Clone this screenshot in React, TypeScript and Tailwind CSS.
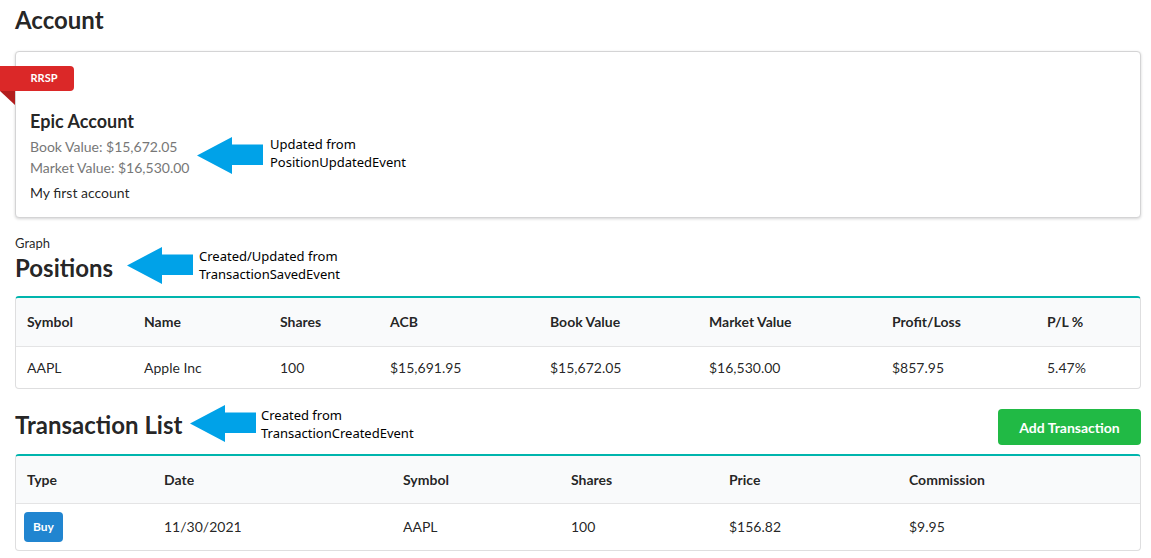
import React from "react";

const Arrow = ({ className }: { className: string }) => (
  <svg className={className} width="66" height="37" viewBox="0 0 66 37">
    <polygon points="0,18.5 35,0 35,7.5 66,7.5 66,28 35,28 35,37" fill="#00a2e8" />
  </svg>
);

const Note = ({ className, lines }: { className: string; lines: string[] }) => (
  <div className={"absolute text-[13px] leading-[18px] text-black font-['Noto_Sans',sans-serif] " + className}>
    {lines.map((l) => (
      <div key={l}>{l}</div>
    ))}
  </div>
);

const posCols = [117, 136, 110, 160, 159, 183, 155, 105];
const posHead = ["Symbol", "Name", "Shares", "ACB", "Book Value", "Market Value", "Profit/Loss", "P/L %"];
const posRow = ["AAPL", "Apple Inc", "100", "$15,691.95", "$15,672.05", "$16,530.00", "$857.95", "5.47%"];

const txCols = [137, 239, 168, 158, 180, 243];
const txHead = ["Type", "Date", "Symbol", "Shares", "Price", "Commission"];
const txRow = ["", "11/30/2021", "AAPL", "100", "$156.82", "$9.95"];

export default function App() {
  return (
    <div className="relative w-[1151px] h-[558px] overflow-hidden bg-white font-['Lato',sans-serif] text-[14px] text-[rgba(0,0,0,0.87)]">
      <div className="pl-[15px] pr-[10px] pt-[4px]">
        <h2 className="text-[24px] leading-[31px] font-bold text-[rgba(0,0,0,0.87)]">Account</h2>

        <div className="mt-[16px] rounded-[4px] border border-[#d4d4d5] bg-white shadow-[0_1px_3px_0_#d4d4d5] px-[14px] pt-[14px] pb-[14px]">
          <div className="relative ml-[-30px] inline-flex h-[25px] w-[74px] items-center justify-center rounded-r-[4px] bg-[#db2828] pl-[14px] text-[11px] font-bold text-white">
            RRSP
            <div className="absolute left-0 top-[25px] h-0 w-0 border-t-[14px] border-l-[15px] border-t-[#b21e1e] border-l-transparent" />
          </div>
          <div className="mt-[19px] text-[18px] leading-[23px] font-bold">Epic Account</div>
          <div className="mt-[3px] leading-[21px] text-[#777777]">Book Value: $15,672.05</div>
          <div className="leading-[21px] text-[#777777]">Market Value: $16,530.00</div>
          <div className="mt-[4px] leading-[21px]">My first account</div>
        </div>

        <div className="mt-[16px] text-[13px] leading-[18px]">Graph</div>
        <h2 className="text-[24px] leading-[31px] font-bold">Positions</h2>

        <div className="mt-[13px] overflow-hidden rounded-[4px] border border-[#dededf] border-t-2 border-t-[#00b5ad]">
          <table className="w-full table-fixed border-collapse">
            <colgroup>
              {posCols.map((w, i) => (
                <col key={i} style={{ width: w }} />
              ))}
            </colgroup>
            <thead>
              <tr className="h-[48px] bg-[#f9fafb] border-b border-[#e4e4e5]">
                {posHead.map((h) => (
                  <th key={h} className="px-[11px] text-left font-bold">{h}</th>
                ))}
              </tr>
            </thead>
            <tbody>
              <tr className="h-[42px]">
                {posRow.map((c, i) => (
                  <td key={i} className="px-[11px]">{c}</td>
                ))}
              </tr>
            </tbody>
          </table>
        </div>

        <div className="mt-[20px] flex items-start justify-between">
          <h2 className="text-[24px] leading-[31px] font-bold">Transaction List</h2>
          <button className="h-[36px] w-[143px] rounded-[4px] bg-[#21ba45] text-[14px] font-bold text-white">Add Transaction</button>
        </div>

        <div className="mt-[9px] overflow-hidden rounded-[4px] border border-[#dededf] border-t-2 border-t-[#00b5ad]">
          <table className="w-full table-fixed border-collapse">
            <colgroup>
              {txCols.map((w, i) => (
                <col key={i} style={{ width: w }} />
              ))}
            </colgroup>
            <thead>
              <tr className="h-[47px] bg-[#f9fafb] border-b border-[#e4e4e5]">
                {txHead.map((h) => (
                  <th key={h} className="px-[11px] text-left font-bold">{h}</th>
                ))}
              </tr>
            </thead>
            <tbody>
              <tr className="h-[47px]">
                {txRow.map((c, i) =>
                  i === 0 ? (
                    <td key={i} className="px-[8px]">
                      <span className="inline-flex h-[30px] w-[39px] items-center justify-center rounded-[4px] bg-[#2185d0] text-[12px] font-bold text-white">Buy</span>
                    </td>
                  ) : (
                    <td key={i} className="px-[11px]">{c}</td>
                  )
                )}
              </tr>
            </tbody>
          </table>
        </div>
      </div>

      <Arrow className="absolute left-[197px] top-[137px]" />
      <Note className="left-[270px] top-[135px]" lines={["Updated from", "PositionUpdatedEvent"]} />
      <Arrow className="absolute left-[127px] top-[247px]" />
      <Note className="left-[199px] top-[247px]" lines={["Created/Updated from", "TransactionSavedEvent"]} />
      <Arrow className="absolute left-[190px] top-[405px]" />
      <Note className="left-[261px] top-[406px]" lines={["Created from", "TransactionCreatedEvent"]} />
    </div>
  );
}
